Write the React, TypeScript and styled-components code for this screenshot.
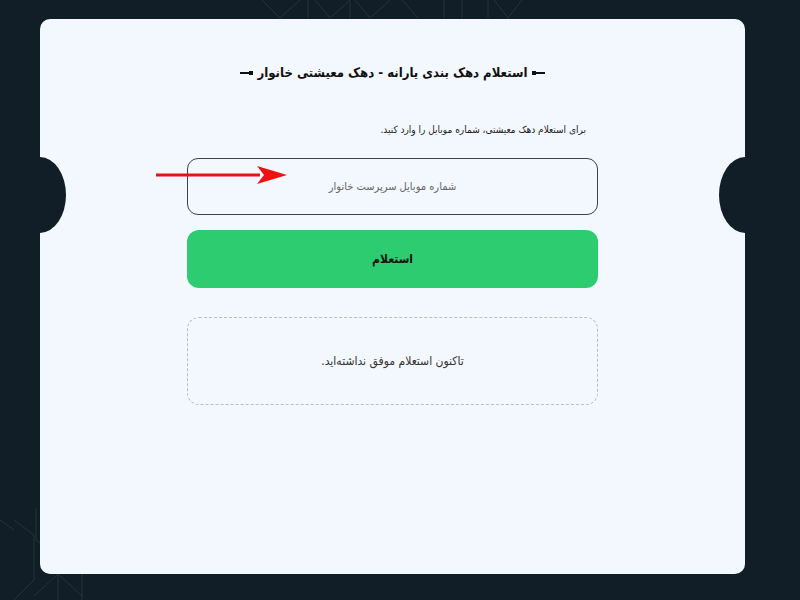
import React from "react";
import styled, { createGlobalStyle } from "styled-components";

const Global = createGlobalStyle`
  html, body { margin: 0; padding: 0; }
  body {
    background: #121e27;
    font-family: "DejaVu Sans Condensed", "DejaVu Sans", sans-serif;
    font-stretch: condensed;
    width: 800px;
    height: 600px;
    overflow: hidden;
  }
`;

const Page = styled.div`
  position: relative;
  width: 800px;
  height: 600px;
  box-sizing: border-box;
  padding: 19px 55px 26px 40px;
  display: flex;
`;

const Pattern = styled.svg`
  position: absolute;
  left: 0;
  top: 0;
  pointer-events: none;
`;

const Card = styled.main`
  position: relative;
  flex: 1;
  background: #f3f7fe;
  border-radius: 10px;
  display: flex;
  flex-direction: column;
  align-items: center;
  padding-top: 40px;
  direction: rtl;

  &::before, &::after {
    content: "";
    position: absolute;
    top: 138px;
    width: 52px;
    height: 76px;
    border-radius: 50%;
    background: #121e27;
  }
  &::before { left: -26px; }
  &::after { right: -26px; }
`;

const Heading = styled.h1`
  margin: 0;
  display: flex;
  align-items: center;
  gap: 5px;
  font-size: 13px;
  font-weight: 700;
  color: #111;
  line-height: 28px;
`;

const Marker = styled.span<{ $flip?: boolean }>`
  display: inline-flex;
  align-items: center;
  flex-direction: ${(p) => (p.$flip ? "row-reverse" : "row")};
  &::before {
    content: "";
    width: 4px;
    height: 4px;
    background: #111;
  }
  &::after {
    content: "";
    width: 9px;
    height: 1.5px;
    background: #111;
  }
`;

const Column = styled.div`
  width: 411px;
  display: flex;
  flex-direction: column;
  margin-top: 33px;
`;

const Hint = styled.p`
  margin: 0 12px 0 0;
  font-size: 10px;
  color: #222;
  line-height: 20px;
`;

const InputWrap = styled.div`
  position: relative;
  margin-top: 18px;
`;

const Input = styled.input`
  box-sizing: border-box;
  width: 100%;
  height: 57px;
  border: 1px solid #3d4247;
  border-radius: 11px;
  background: transparent;
  text-align: center;
  font-family: inherit;
  font-stretch: condensed;
  font-size: 11px;
  direction: rtl;
  outline: none;
  &::placeholder { color: #666; }
`;

const Arrow = styled.svg`
  position: absolute;
  left: -31px;
  top: 6px;
`;

const Submit = styled.button`
  margin-top: 15px;
  height: 58px;
  border: none;
  border-radius: 12px;
  background: #2ecc71;
  color: #111;
  font-family: inherit;
  font-stretch: condensed;
  font-size: 12px;
  font-weight: 700;
`;

const Empty = styled.div`
  margin-top: 29px;
  height: 88px;
  box-sizing: border-box;
  border: 1px dashed #b9bec6;
  border-radius: 12px;
  display: flex;
  align-items: center;
  justify-content: center;
  font-size: 12px;
  color: #333;
`;

export default function App() {
  const line = "#25323c";
  return (
    <>
      <Global />
      <Page>
        <Pattern width="800" height="600" viewBox="0 0 800 600">
          <g stroke={line} strokeWidth="1" fill="none">
            <path d="M262 0 L280 18 L300 0 M308 0 V18 M315 0 L330 18 L350 0 M350 0 V18 M355 0 L370 18 L390 0 M402 0 L418 18 M444 0 V18 M462 0 V18 M488 0 V18 M494 0 L508 18 L522 0 M508 18 V40" />
            <path d="M0 520 L14 530 M14 520 L34 535 L34 580 M36 508 V540 M36 540 L60 558 M58 574 L34 596 M58 574 L82 596 M58 574 V600 M82 574 V600 M34 580 L14 600" />
          </g>
        </Pattern>
        <Card>
          <Heading>
            <Marker $flip />
            استعلام دهک بندی یارانه - دهک معیشتی خانوار
            <Marker />
          </Heading>
          <Column>
            <Hint>برای استعلام دهک معیشتی، شماره موبایل را وارد کنید.</Hint>
            <InputWrap>
              <Input placeholder="شماره موبایل سرپرست خانوار" />
              <Arrow width="132" height="24" viewBox="0 0 132 24">
                <line x1="0" y1="11" x2="104" y2="11" stroke="#ee1111" strokeWidth="3" />
                <path d="M101 2 L131 11 L101 20 L108 11 Z" fill="#ee1111" />
              </Arrow>
            </InputWrap>
            <Submit>استعلام</Submit>
            <Empty>تاکنون استعلام موفق نداشته‌اید.</Empty>
          </Column>
        </Card>
      </Page>
    </>
  );
}
